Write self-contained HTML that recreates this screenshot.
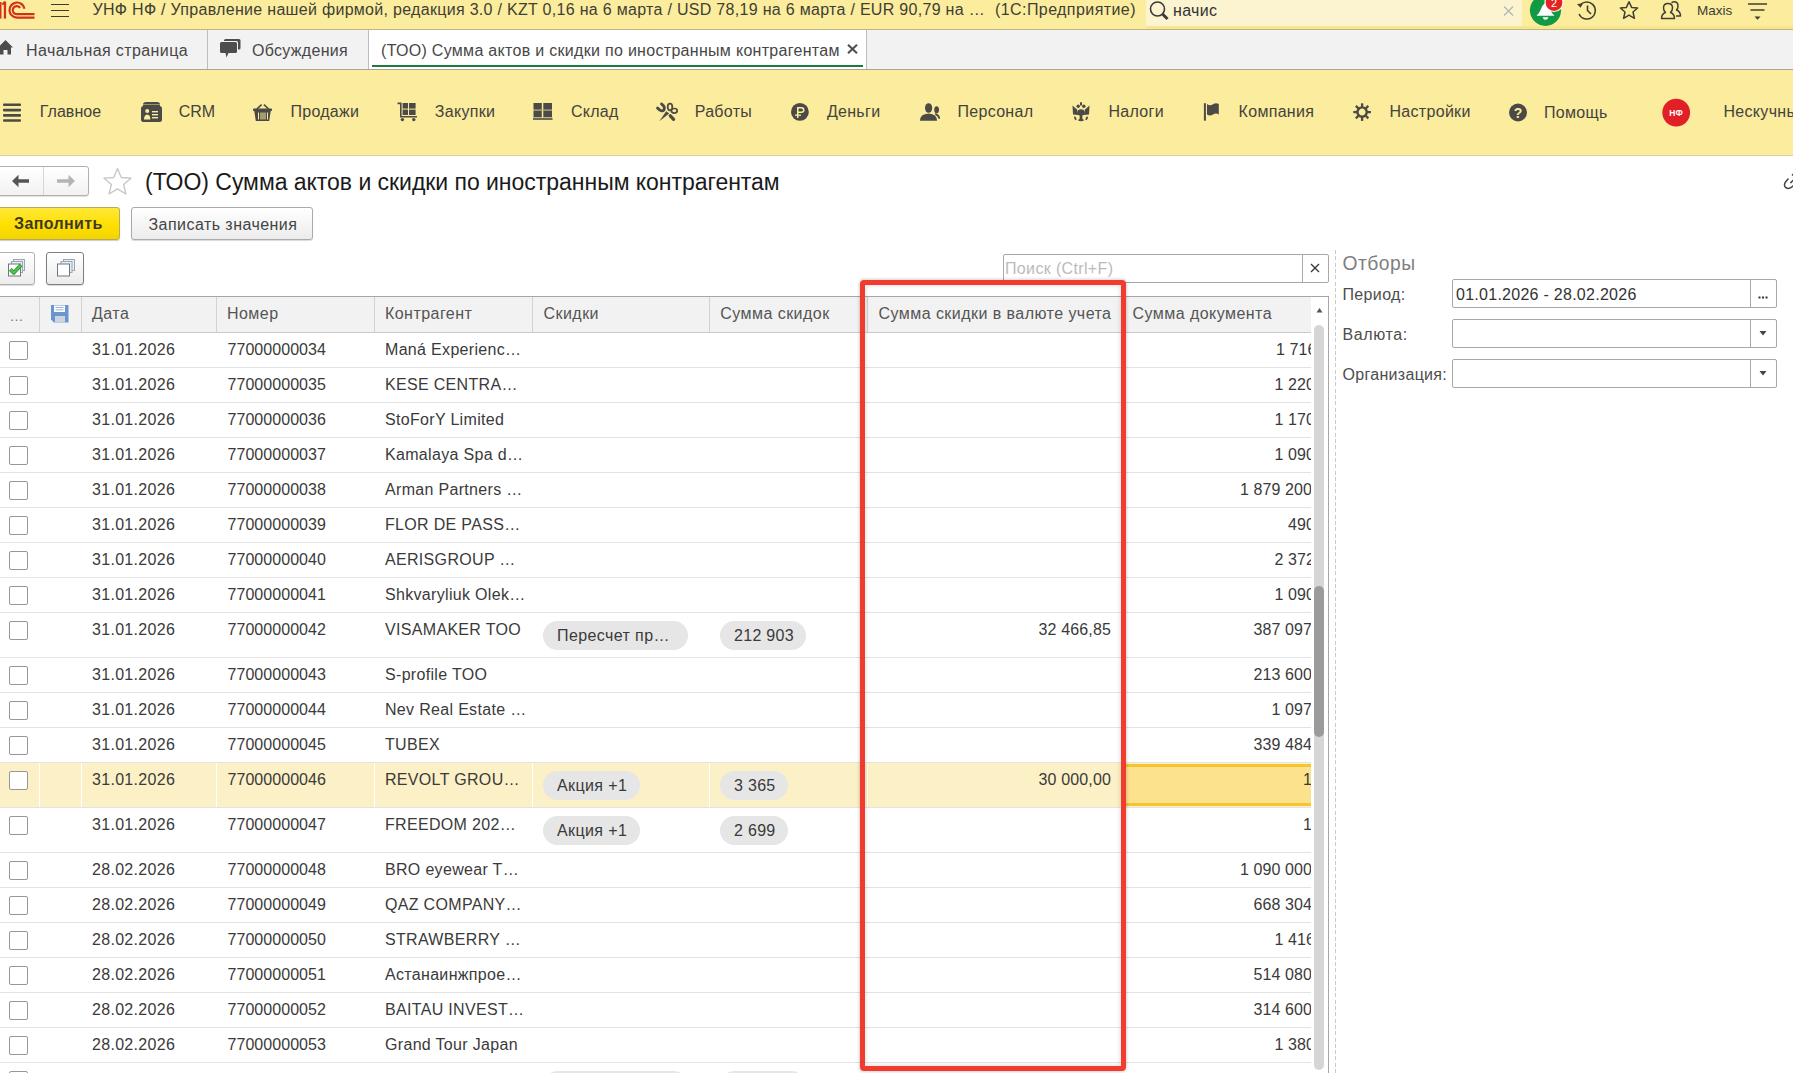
<!DOCTYPE html>
<html><head><meta charset="utf-8"><style>
html,body{margin:0;padding:0;width:1793px;height:1073px;overflow:hidden;background:#fff;position:relative}
.t{position:absolute;font-family:"Liberation Sans", sans-serif;white-space:nowrap}
.r{position:absolute}
</style></head><body>
<div class="r" style="left:0px;top:0px;width:1793px;height:29px;background:#FBEC9E"></div>
<div class="r" style="left:0px;top:29px;width:1793px;height:1px;background:#BDB383"></div>
<div class="r" style="left:1146px;top:0px;width:376px;height:26px;background:#FCF4D0"></div>
<div class="r" style="left:1146px;top:26px;width:647px;height:3px;background:#F8E68C"></div>
<svg class="r" style="left:0;top:0" width="40" height="24" viewBox="0 0 40 24">
<g fill="#D0331A"><rect x="0" y="2" width="1.5" height="16.6"/><rect x="3.8" y="1.5" width="2.3" height="17.1"/></g>
<g fill="none" stroke="#D0331A" stroke-width="2.2">
<path d="M2.2 4.5 L5 2"/>
<path d="M24.48 8.74 A7.55 7.55 0 1 0 17.05 17.6 H34.5"/>
<path d="M20.1 7.9 A4.05 4.05 0 1 0 16.95 14.2 H34.5"/>
</g></svg>
<div class="r" style="left:51px;top:3.6px;width:18px;height:1.6px;background:#3E3B28"></div>
<div class="r" style="left:51px;top:9.6px;width:18px;height:1.6px;background:#3E3B28"></div>
<div class="r" style="left:51px;top:15.8px;width:18px;height:1.6px;background:#3E3B28"></div>
<div class="t" style="left:92.5px;top:0.3px;font-size:16px;line-height:20px;color:#3F3F33;font-weight:normal;letter-spacing:0.3px">УНФ НФ / Управление нашей фирмой, редакция 3.0 / KZT 0,16 на 6 марта / USD 78,19 на 6 марта / EUR 90,79 на …</div>
<div class="t" style="left:995px;top:0.3px;font-size:16px;line-height:20px;color:#3F3F33;font-weight:normal;letter-spacing:0.42px">(1С:Предприятие)</div>
<svg class="r" style="left:1149px;top:0" width="22" height="22" viewBox="0 0 22 22">
<circle cx="8.5" cy="9" r="7" fill="none" stroke="#3A3A3A" stroke-width="1.6"/>
<path d="M13.5 14 L18.5 19" stroke="#3A3A3A" stroke-width="3" stroke-linecap="butt"/></svg>
<div class="t" style="left:1173px;top:0.5px;font-size:16px;line-height:20px;color:#333;font-weight:normal;letter-spacing:0.35px">начис</div>
<svg class="r" style="left:1503px;top:6px" width="11" height="10" viewBox="0 0 11 10">
<path d="M1 0.5 L10 9.5 M10 0.5 L1 9.5" stroke="#B5B5B5" stroke-width="1.3"/></svg>
<svg class="r" style="left:1528px;top:0" width="40" height="29" viewBox="0 0 40 29">
<circle cx="17.5" cy="10.3" r="15.6" fill="#119A43"/>
<path d="M8.5 15.8 Q11 14 13 9 Q15 3.5 17.5 3.5 Q20 3.5 22 9 Q24 14 26.5 15.8 Z" fill="#fff"/>
<path d="M14.5 17.3 H20.5 Q19.5 19.8 17.5 19.8 Q15.5 19.8 14.5 17.3Z" fill="#fff"/>
<circle cx="26" cy="2.5" r="9" fill="#E52421" stroke="#fff" stroke-width="1.2"/>
<text x="26" y="6.5" font-family="Liberation Sans" font-size="11" fill="#fff" text-anchor="middle">2</text>
</svg>
<svg class="r" style="left:1575px;top:0" width="24" height="22" viewBox="0 0 24 22">
<path d="M4.6 6 A8.5 8.5 0 1 1 4 14" fill="none" stroke="#3F3F33" stroke-width="1.5"/>
<path d="M2 4 L5.5 7.8 L8 3.5 Z" fill="#3F3F33"/>
<path d="M12.5 5.5 V10.5 L16 14" fill="none" stroke="#3F3F33" stroke-width="1.6"/>
</svg>
<svg class="r" style="left:1618px;top:0" width="22" height="21" viewBox="0 0 22 21">
<path d="M11 1.8 L13.6 7.4 L19.6 8 L15 12 L16.4 18.3 L11 15.1 L5.6 18.3 L7 12 L2.4 8 L8.4 7.4 Z" fill="none" stroke="#3F3F33" stroke-width="1.5" stroke-linejoin="round"/></svg>
<svg class="r" style="left:1659px;top:0" width="24" height="21" viewBox="0 0 24 21">
<g fill="none" stroke="#3F3F33" stroke-width="1.5" stroke-linejoin="round">
<path d="M2.5 18.5 Q2.5 14 6.5 12.5 Q4.5 10.5 4.5 8 Q4.5 3.5 9 3.5 Q13.5 3.5 13.5 8 Q13.5 10.5 11.5 12.5 Q15.5 14 15.5 18.5 Z"/>
<path d="M12.5 2.8 Q14 1.8 15 1.8 Q19 1.8 19 6 Q19 8.5 17.5 10 Q21.5 11.5 21.5 16 H17"/>
</g></svg>
<div class="t" style="left:1697px;top:1.5px;font-size:13.5px;line-height:18px;color:#3F3F33;font-weight:normal;">Maxis</div>
<svg class="r" style="left:1747px;top:0" width="21" height="22" viewBox="0 0 21 22">
<path d="M1 4 H20 M3.5 10 H17.5" stroke="#3F3F33" stroke-width="1.5"/>
<path d="M7.5 16.5 H13.5 L10.5 19.8 Z" fill="#3F3F33"/></svg>
<div class="r" style="left:0px;top:30px;width:1793px;height:39px;background:#F2F2F2"></div>
<div class="r" style="left:0px;top:69px;width:1793px;height:1px;background:#A9A596"></div>
<div class="r" style="left:207px;top:30px;width:1px;height:39px;background:#BDBDBD"></div>
<div class="r" style="left:368px;top:30px;width:498px;height:39px;background:#FFFFFF"></div>
<div class="r" style="left:368px;top:30px;width:1px;height:39px;background:#BDBDBD"></div>
<div class="r" style="left:866px;top:30px;width:1px;height:39px;background:#BDBDBD"></div>
<div class="r" style="left:372px;top:65px;width:491px;height:2px;background:#1E7A3C"></div>
<svg class="r" style="left:0;top:38px" width="14" height="18" viewBox="0 0 14 18">
<path d="M-2 9.5 L5.5 2 L13 9.5 H11 V16.5 H7.5 V12 H3.5 V16.5 H0 V9.5 Z" fill="#4D4D4D"/></svg>
<div class="t" style="left:26px;top:40.5px;font-size:16px;line-height:20px;color:#474747;font-weight:normal;letter-spacing:0.4px">Начальная страница</div>
<svg class="r" style="left:219px;top:38px" width="23" height="21" viewBox="0 0 23 21">
<path d="M5 2.5 Q5 1 6.5 1 H20 Q21.5 1 21.5 2.5 V10 Q21.5 11.5 20 11.5 H19 V4.5 Q19 3 17.5 3 H5 Z" fill="#4D4D4D"/>
<path d="M1 5.5 Q1 4 2.5 4 H16.5 Q18 4 18 5.5 V13.5 Q18 15 16.5 15 H9.5 L7.5 19.5 L6.5 15 H2.5 Q1 15 1 13.5 Z" fill="#4D4D4D"/></svg>
<div class="t" style="left:252px;top:40.5px;font-size:16px;line-height:20px;color:#474747;font-weight:normal;letter-spacing:0.3px">Обсуждения</div>
<div class="t" style="left:381px;top:40.5px;font-size:16px;line-height:20px;color:#474747;font-weight:normal;letter-spacing:0.3px">(ТОО) Сумма актов и скидки по иностранным контрагентам</div>
<svg class="r" style="left:847px;top:44px" width="11" height="10" viewBox="0 0 11 10">
<path d="M1 0.8 L10 9.2 M10 0.8 L1 9.2" stroke="#4D4D4D" stroke-width="2"/></svg>
<div class="r" style="left:0px;top:70px;width:1793px;height:85px;background:#FBEC9E"></div>
<div class="r" style="left:0px;top:155px;width:1793px;height:1px;background:#D9D0A0"></div>
<div class="t" style="left:39.7px;top:102px;font-size:16px;line-height:20px;color:#44433D;font-weight:normal;letter-spacing:0.05px">Главное</div>
<div class="t" style="left:178.7px;top:102px;font-size:16px;line-height:20px;color:#44433D;font-weight:normal;letter-spacing:0.0px">CRM</div>
<div class="t" style="left:290.4px;top:102px;font-size:16px;line-height:20px;color:#44433D;font-weight:normal;letter-spacing:0.3px">Продажи</div>
<div class="t" style="left:434.8px;top:102px;font-size:16px;line-height:20px;color:#44433D;font-weight:normal;letter-spacing:0.3px">Закупки</div>
<div class="t" style="left:570.9px;top:102px;font-size:16px;line-height:20px;color:#44433D;font-weight:normal;letter-spacing:0.3px">Склад</div>
<div class="t" style="left:694.7px;top:102px;font-size:16px;line-height:20px;color:#44433D;font-weight:normal;letter-spacing:0.3px">Работы</div>
<div class="t" style="left:826.9px;top:102px;font-size:16px;line-height:20px;color:#44433D;font-weight:normal;letter-spacing:0.3px">Деньги</div>
<div class="t" style="left:957.5px;top:102px;font-size:16px;line-height:20px;color:#44433D;font-weight:normal;letter-spacing:0.3px">Персонал</div>
<div class="t" style="left:1108.5px;top:102px;font-size:16px;line-height:20px;color:#44433D;font-weight:normal;letter-spacing:0.3px">Налоги</div>
<div class="t" style="left:1238.6px;top:102px;font-size:16px;line-height:20px;color:#44433D;font-weight:normal;letter-spacing:0.3px">Компания</div>
<div class="t" style="left:1389.5px;top:102px;font-size:16px;line-height:20px;color:#44433D;font-weight:normal;letter-spacing:0.3px">Настройки</div>
<div class="t" style="left:1544px;top:102.7px;font-size:16px;line-height:20px;color:#44433D;font-weight:normal;letter-spacing:0.3px">Помощь</div>
<div class="t" style="left:1723.5px;top:102px;font-size:16px;line-height:20px;color:#44433D;font-weight:normal;letter-spacing:0.3px">Нескучные</div>
<svg class="r" style="left:0;top:95px" width="1793" height="40" viewBox="0 95 1793 40">
<g fill="#4B4A46">
<rect x="3" y="103.5" width="18" height="2.6" rx="1"/><rect x="3" y="108.8" width="18" height="2.6" rx="1"/><rect x="3" y="114.1" width="18" height="2.6" rx="1"/><rect x="3" y="119.2" width="18" height="2.6" rx="1"/>
<path d="M143 106.5 V104.5 Q143 102 146 102 H157 Q160 102 160 104.5 V106.5 Z"/>
<rect x="141" y="106" width="21" height="16" rx="2.5"/>
<rect x="253" y="108.6" width="19" height="2.4" rx="0.8"/><path d="M254.2 110.5 H270.8 L269.2 121 H255.8 Z"/>
<path d="M256.8 109 L261.6 104.6 M263.9 104.6 L268.7 109" fill="none" stroke="#4B4A46" stroke-width="1.6"/>
<path d="M397.5 102.6 H401.6 V116 H417 V117.6 H400 V104.2 H397.5 Z"/><circle cx="402.4" cy="119.6" r="1.7"/><circle cx="413.8" cy="119.6" r="1.7"/>
<rect x="402.6" y="103" width="5.4" height="5.6"/><rect x="409" y="103" width="6.6" height="5.6"/><rect x="402.6" y="109.6" width="5.4" height="5.4"/><rect x="409" y="109.6" width="6.6" height="5.4"/>
<rect x="533.5" y="103" width="8.3" height="6.6"/><rect x="543.3" y="103" width="8.7" height="6.6"/><rect x="533.5" y="110.6" width="8.3" height="6.6"/><rect x="543.3" y="110.6" width="8.7" height="6.6"/><rect x="533" y="117.8" width="19.5" height="2.2" opacity="0.8"/>
<rect x="533.5" y="109.6" width="18.5" height="1" opacity="0.35"/>
<circle cx="799.9" cy="111.9" r="8.9"/>
<ellipse cx="928.6" cy="108" rx="3.6" ry="4.8"/>
<path d="M920 120.8 Q920 114.2 928.5 113.6 Q937 114.2 937 120.8 Z"/>
<ellipse cx="936.6" cy="109.8" rx="2.4" ry="3.5"/>
<path d="M935.2 113 Q939.6 114.2 940.2 118.6 L938.8 118.9 Q938 116 935.2 115 Z"/>
<rect x="1080" y="102.3" width="2" height="3.2"/>
<circle cx="1078.2" cy="106.2" r="1.7"/><circle cx="1083.8" cy="106.2" r="1.7"/>
<path d="M1072.5 105.5 L1077 109.5 L1078.3 115 L1073 114.5 Z"/>
<path d="M1089.5 105.5 L1085 109.5 L1083.7 115 L1089 114.5 Z"/>
<ellipse cx="1081" cy="112.5" rx="3.6" ry="3.2"/>
<path d="M1079.8 115 H1082.2 L1082.5 119 Q1084 119.5 1084 120.5 Q1081 122 1078 120.5 Q1078 119.5 1079.5 119 Z"/>
<ellipse cx="1075.3" cy="118.3" rx="1" ry="2" transform="rotate(-25 1075.3 118.3)"/>
<ellipse cx="1086.7" cy="118.3" rx="1" ry="2" transform="rotate(25 1086.7 118.3)"/>
<rect x="1203.9" y="103.2" width="2" height="17.5"/><path d="M1207 104 Q1210 106.3 1213 104.3 Q1216 102.3 1218.8 104 V114.5 Q1216 112.6 1213 114.5 Q1210 116.4 1207 114.6 Z"/>
<circle cx="1518" cy="112.5" r="9"/>
</g>
<circle cx="1676.2" cy="112.6" r="13.9" fill="#E21F26"/>
<text x="1676" y="116" font-family="Liberation Sans" font-weight="bold" font-size="8.5" fill="#fff" text-anchor="middle">НФ</text>
<g fill="#FBEC9E">
<rect x="143" y="104" width="17" height="1" opacity="0.45"/>
<circle cx="147.2" cy="111" r="2"/><path d="M144 119.5 Q144 115 147.2 114.5 Q150.4 115 150.4 119.5 Z"/>
<rect x="152" y="111" width="6" height="1.4"/><rect x="152" y="114" width="6" height="1.4"/><rect x="152" y="117" width="6" height="1.4"/>
<rect x="258" y="112.5" width="1" height="7"/><rect x="260.5" y="112.5" width="1" height="7"/><rect x="262.5" y="112.5" width="1" height="7"/><rect x="264.5" y="112.5" width="1" height="7"/><rect x="267" y="112.5" width="1" height="7"/>
<path d="M797 107 H801.5 Q804.5 107 804.5 110 Q804.5 113 801.5 113 H798.5 V118 H797 Z M798.5 108.4 V111.6 H801.3 Q803 111.6 803 110 Q803 108.4 801.3 108.4 Z"/><rect x="795" y="114.5" width="6" height="1.3"/>
</g>
<text x="1518" y="117.8" font-family="Liberation Sans" font-weight="bold" font-size="14" fill="#FBEC9E" text-anchor="middle">?</text>
<g transform="translate(650,98)">
<path d="M11.5 6 Q15.5 8.5 14 12 Q11.5 14.5 7.5 10" fill="none" stroke="#4B4A46" stroke-width="2.8" stroke-linecap="round"/>
<path d="M9.3 23.3 L16.2 13.3 L19.2 15.6 Z" fill="#4B4A46"/>
<ellipse cx="20" cy="9" rx="2.3" ry="3.3" fill="none" stroke="#4B4A46" stroke-width="1.7"/>
<ellipse cx="24.3" cy="12.8" rx="2.9" ry="2.3" fill="none" stroke="#4B4A46" stroke-width="1.7"/>
<path d="M20.3 17.8 L23.6 21.4" stroke="#4B4A46" stroke-width="3.2" stroke-linecap="round"/>
</g>
<g transform="translate(1362.1,112.1)" fill="#4B4A46">
<circle r="4.7" fill="none" stroke="#4B4A46" stroke-width="2.4"/><rect x="-1.15" y="-8.8" width="2.3" height="4.3" transform="rotate(0)"/><rect x="-1.15" y="-8.8" width="2.3" height="4.3" transform="rotate(45)"/><rect x="-1.15" y="-8.8" width="2.3" height="4.3" transform="rotate(90)"/><rect x="-1.15" y="-8.8" width="2.3" height="4.3" transform="rotate(135)"/><rect x="-1.15" y="-8.8" width="2.3" height="4.3" transform="rotate(180)"/><rect x="-1.15" y="-8.8" width="2.3" height="4.3" transform="rotate(225)"/><rect x="-1.15" y="-8.8" width="2.3" height="4.3" transform="rotate(270)"/><rect x="-1.15" y="-8.8" width="2.3" height="4.3" transform="rotate(315)"/>
</g>
</svg>
<div class="r" style="left:0px;top:156px;width:1793px;height:917px;background:#FFFFFF"></div>
<div class="r" style="left:-4px;top:166px;width:92.5px;height:30px;border:1px solid #B0B0B0;border-radius:3px;background:linear-gradient(#fff,#f1f1f1);box-sizing:border-box;box-shadow:0 1px 1px rgba(0,0,0,.12)"></div>
<div class="r" style="left:43px;top:167px;width:1px;height:28px;background:#D6D6D6"></div>
<svg class="r" style="left:10px;top:172px" width="70" height="18" viewBox="0 0 70 18">
<path d="M2 9 L8.5 2.8 V7.2 H19 V10.8 H8.5 V15.2 Z" fill="#555"/>
<path d="M65 9 L58.5 2.8 V7.2 H47 V10.8 H58.5 V15.2 Z" fill="#B4B4B4"/></svg>
<svg class="r" style="left:101px;top:166px" width="33" height="31" viewBox="0 0 33 31">
<path d="M16.5 2.5 L20.3 11.5 L30 12.2 L22.6 18.5 L24.9 28 L16.5 22.9 L8.1 28 L10.4 18.5 L3 12.2 L12.7 11.5 Z" fill="none" stroke="#C6C6C6" stroke-width="1.3" stroke-linejoin="round"/></svg>
<div class="t" style="left:145px;top:167px;font-size:23px;line-height:30px;color:#1A1A1A;font-weight:normal;letter-spacing:-0.03px">(ТОО) Сумма актов и скидки по иностранным контрагентам</div>
<div class="r" style="left:-4px;top:207px;width:124px;height:33px;border:1px solid #BBAA55;border-radius:3px;background:linear-gradient(#FFE83A,#FFDF00 55%,#F2D500);box-sizing:border-box;box-shadow:0 1px 1px rgba(0,0,0,.2)"></div>
<div class="t" style="left:14px;top:214px;font-size:16px;line-height:20px;color:#3D3A26;font-weight:bold;letter-spacing:0.38px">Заполнить</div>
<div class="r" style="left:131px;top:207px;width:182px;height:33px;border:1px solid #AAAAAA;border-radius:3px;background:linear-gradient(#fff,#ECECEC);box-sizing:border-box;box-shadow:0 1px 1px rgba(0,0,0,.15)"></div>
<div class="t" style="left:148.5px;top:214.5px;font-size:16px;line-height:20px;color:#444;font-weight:normal;letter-spacing:0.45px">Записать значения</div>
<div class="r" style="left:-4px;top:252px;width:39px;height:33px;border:1px solid #B0B0B0;border-radius:3px;background:linear-gradient(#fff,#ECECEC);box-sizing:border-box;box-shadow:0 1px 1px rgba(0,0,0,.15)"></div>
<div class="r" style="left:46px;top:252px;width:38px;height:33px;border:1px solid #7E7E7E;border-radius:3px;background:linear-gradient(#fff,#ECECEC);box-sizing:border-box;box-shadow:0 1px 1px rgba(0,0,0,.15)"></div>
<svg class="r" style="left:7px;top:258px" width="20" height="20" viewBox="0 0 20 20">
<rect x="6.5" y="1.5" width="11" height="11" fill="#E5EEF5" stroke="#9AA6B0"/>
<rect x="4.5" y="3.5" width="11" height="11" fill="#E5EEF5" stroke="#9AA6B0"/>
<rect x="1.5" y="6" width="12" height="12" fill="#fff" stroke="#6E7880"/>
<path d="M3.3 11.3 L6.8 14.8 L14 7" fill="none" stroke="#2E8B2E" stroke-width="3.8" stroke-linejoin="round"/><path d="M3.3 11.3 L6.8 14.8 L14 7" fill="none" stroke="#4CC44A" stroke-width="2.4" stroke-linejoin="round"/></svg>
<svg class="r" style="left:56px;top:258px" width="20" height="20" viewBox="0 0 20 20">
<rect x="7.5" y="1.5" width="11" height="11" fill="#E5EEF5" stroke="#9AA6B0"/>
<rect x="5" y="3.5" width="11" height="11" fill="#E5EEF5" stroke="#9AA6B0"/>
<rect x="1.5" y="6" width="12" height="12" fill="#fff" stroke="#6E7880"/></svg>
<div class="r" style="left:1003px;top:254px;width:326px;height:29px;border:1px solid #A8A8A8;border-radius:2px;box-sizing:border-box;background:#fff"></div>
<div class="r" style="left:1302px;top:255px;width:1px;height:27px;background:#A8A8A8"></div>
<div class="t" style="left:1005px;top:258.5px;font-size:16px;line-height:20px;color:#BBBBBB;font-weight:normal;letter-spacing:0.35px">Поиск (Ctrl+F)</div>
<svg class="r" style="left:1310px;top:263px" width="10" height="10" viewBox="0 0 10 10">
<path d="M1 1 L9 9 M9 1 L1 9" stroke="#333" stroke-width="1.25"/></svg>
<div class="r" style="left:0;top:296px;width:1329px;height:777px;overflow:hidden">
<div class="r" style="left:0;top:0;width:1328px;height:1px;background:#A6A6A6"></div>
<div class="r" style="left:1328px;top:0;width:1px;height:777px;background:#A6A6A6"></div>
<div class="r" style="left:0;top:1px;width:1311px;height:35px;background:#F2F2F2"></div>
<div class="r" style="left:0;top:36px;width:1311px;height:1px;background:#C9C9C9"></div>
<div class="r" style="left:39px;top:1px;width:1px;height:35px;background:#D2D2D2"></div>
<div class="r" style="left:81px;top:1px;width:1px;height:35px;background:#D2D2D2"></div>
<div class="r" style="left:216px;top:1px;width:1px;height:35px;background:#D2D2D2"></div>
<div class="r" style="left:374px;top:1px;width:1px;height:35px;background:#D2D2D2"></div>
<div class="r" style="left:532px;top:1px;width:1px;height:35px;background:#D2D2D2"></div>
<div class="r" style="left:709px;top:1px;width:1px;height:35px;background:#D2D2D2"></div>
<div class="r" style="left:867px;top:1px;width:1px;height:35px;background:#D2D2D2"></div>
<div class="r" style="left:1121px;top:1px;width:1px;height:35px;background:#D2D2D2"></div>
</div>
<div class="t" style="left:92px;top:304px;font-size:16px;line-height:20px;color:#555555;font-weight:normal;letter-spacing:0.45px">Дата</div>
<div class="t" style="left:227px;top:304px;font-size:16px;line-height:20px;color:#555555;font-weight:normal;letter-spacing:0.45px">Номер</div>
<div class="t" style="left:385px;top:304px;font-size:16px;line-height:20px;color:#555555;font-weight:normal;letter-spacing:0.45px">Контрагент</div>
<div class="t" style="left:543.5px;top:304px;font-size:16px;line-height:20px;color:#555555;font-weight:normal;letter-spacing:0.45px">Скидки</div>
<div class="t" style="left:720.3px;top:304px;font-size:16px;line-height:20px;color:#555555;font-weight:normal;letter-spacing:0.45px">Сумма скидок</div>
<div class="t" style="left:878.5px;top:304px;font-size:16px;line-height:20px;color:#555555;font-weight:normal;letter-spacing:0.45px">Сумма скидки в валюте учета</div>
<div class="t" style="left:1132.5px;top:304px;font-size:16px;line-height:20px;color:#555555;font-weight:normal;letter-spacing:0.45px">Сумма документа</div>
<div class="t" style="left:9.5px;top:306px;font-size:14px;line-height:20px;color:#777;font-weight:normal;">…</div>
<svg class="r" style="left:50px;top:304px" width="20" height="20" viewBox="0 0 20 20">
<path d="M1 1 H18.5 V18.5 H4 L1 15.5 Z" fill="#6C95CF"/>
<rect x="4" y="1.5" width="11" height="6.5" fill="#fff"/>
<rect x="5.5" y="3" width="8" height="1" fill="#8FB0DC"/><rect x="5.5" y="5.3" width="8" height="1" fill="#8FB0DC"/>
<rect x="5" y="12" width="10" height="6.5" fill="#C9D4E0"/>
</svg>
<svg class="r" style="left:1315px;top:306px" width="9" height="8" viewBox="0 0 9 8"><path d="M1.5 6.5 H7.5 L4.5 2 Z" fill="#555"/></svg>
<div class="r" style="left:1314px;top:325px;width:10px;height:745px;background:#D6D6D6;border-radius:5px"></div>
<div class="r" style="left:1314px;top:586px;width:10px;height:151px;background:#9B9B9B;border-radius:5px"></div>
<div class="r" style="left:9px;top:340.5px;width:19px;height:19px;border:1px solid #979797;border-radius:2px;background:#fff;box-sizing:border-box"></div>
<div class="t" style="left:92px;top:340px;font-size:16px;line-height:20px;color:#3A3A3A;font-weight:normal;letter-spacing:0.3px">31.01.2026</div>
<div class="t" style="left:227.5px;top:340px;font-size:16px;line-height:20px;color:#3A3A3A;font-weight:normal;letter-spacing:0.05px">77000000034</div>
<div class="t" style="left:385px;top:340px;font-size:16px;line-height:20px;color:#3A3A3A;font-weight:normal;letter-spacing:0.32px;white-space:nowrap">Maná Experienc…</div>
<div class="r" style="left:1121px;top:333px;width:190px;height:30px;overflow:hidden"><div class="t" style="right:-5.5px;top:7px;font-size:16px;line-height:20px;color:#3A3A3A;letter-spacing:0.1px">1 716</div></div>
<div class="r" style="left:0px;top:367px;width:1311px;height:1px;background:#E3E3E3"></div>
<div class="r" style="left:9px;top:375.5px;width:19px;height:19px;border:1px solid #979797;border-radius:2px;background:#fff;box-sizing:border-box"></div>
<div class="t" style="left:92px;top:375px;font-size:16px;line-height:20px;color:#3A3A3A;font-weight:normal;letter-spacing:0.3px">31.01.2026</div>
<div class="t" style="left:227.5px;top:375px;font-size:16px;line-height:20px;color:#3A3A3A;font-weight:normal;letter-spacing:0.05px">77000000035</div>
<div class="t" style="left:385px;top:375px;font-size:16px;line-height:20px;color:#3A3A3A;font-weight:normal;letter-spacing:0.32px;white-space:nowrap">KESE CENTRA…</div>
<div class="r" style="left:1121px;top:368px;width:190px;height:30px;overflow:hidden"><div class="t" style="right:-4px;top:7px;font-size:16px;line-height:20px;color:#3A3A3A;letter-spacing:0.1px">1 220</div></div>
<div class="r" style="left:0px;top:402px;width:1311px;height:1px;background:#E3E3E3"></div>
<div class="r" style="left:9px;top:410.5px;width:19px;height:19px;border:1px solid #979797;border-radius:2px;background:#fff;box-sizing:border-box"></div>
<div class="t" style="left:92px;top:410px;font-size:16px;line-height:20px;color:#3A3A3A;font-weight:normal;letter-spacing:0.3px">31.01.2026</div>
<div class="t" style="left:227.5px;top:410px;font-size:16px;line-height:20px;color:#3A3A3A;font-weight:normal;letter-spacing:0.05px">77000000036</div>
<div class="t" style="left:385px;top:410px;font-size:16px;line-height:20px;color:#3A3A3A;font-weight:normal;letter-spacing:0.32px;white-space:nowrap">StoForY Limited</div>
<div class="r" style="left:1121px;top:403px;width:190px;height:30px;overflow:hidden"><div class="t" style="right:-4px;top:7px;font-size:16px;line-height:20px;color:#3A3A3A;letter-spacing:0.1px">1 170</div></div>
<div class="r" style="left:0px;top:437px;width:1311px;height:1px;background:#E3E3E3"></div>
<div class="r" style="left:9px;top:445.5px;width:19px;height:19px;border:1px solid #979797;border-radius:2px;background:#fff;box-sizing:border-box"></div>
<div class="t" style="left:92px;top:445px;font-size:16px;line-height:20px;color:#3A3A3A;font-weight:normal;letter-spacing:0.3px">31.01.2026</div>
<div class="t" style="left:227.5px;top:445px;font-size:16px;line-height:20px;color:#3A3A3A;font-weight:normal;letter-spacing:0.05px">77000000037</div>
<div class="t" style="left:385px;top:445px;font-size:16px;line-height:20px;color:#3A3A3A;font-weight:normal;letter-spacing:0.32px;white-space:nowrap">Kamalaya Spa d…</div>
<div class="r" style="left:1121px;top:438px;width:190px;height:30px;overflow:hidden"><div class="t" style="right:-4px;top:7px;font-size:16px;line-height:20px;color:#3A3A3A;letter-spacing:0.1px">1 090</div></div>
<div class="r" style="left:0px;top:472px;width:1311px;height:1px;background:#E3E3E3"></div>
<div class="r" style="left:9px;top:480.5px;width:19px;height:19px;border:1px solid #979797;border-radius:2px;background:#fff;box-sizing:border-box"></div>
<div class="t" style="left:92px;top:480px;font-size:16px;line-height:20px;color:#3A3A3A;font-weight:normal;letter-spacing:0.3px">31.01.2026</div>
<div class="t" style="left:227.5px;top:480px;font-size:16px;line-height:20px;color:#3A3A3A;font-weight:normal;letter-spacing:0.05px">77000000038</div>
<div class="t" style="left:385px;top:480px;font-size:16px;line-height:20px;color:#3A3A3A;font-weight:normal;letter-spacing:0.32px;white-space:nowrap">Arman Partners …</div>
<div class="r" style="left:1121px;top:473px;width:190px;height:30px;overflow:hidden"><div class="t" style="right:-1px;top:7px;font-size:16px;line-height:20px;color:#3A3A3A;letter-spacing:0.1px">1 879 200</div></div>
<div class="r" style="left:0px;top:507px;width:1311px;height:1px;background:#E3E3E3"></div>
<div class="r" style="left:9px;top:515.5px;width:19px;height:19px;border:1px solid #979797;border-radius:2px;background:#fff;box-sizing:border-box"></div>
<div class="t" style="left:92px;top:515px;font-size:16px;line-height:20px;color:#3A3A3A;font-weight:normal;letter-spacing:0.3px">31.01.2026</div>
<div class="t" style="left:227.5px;top:515px;font-size:16px;line-height:20px;color:#3A3A3A;font-weight:normal;letter-spacing:0.05px">77000000039</div>
<div class="t" style="left:385px;top:515px;font-size:16px;line-height:20px;color:#3A3A3A;font-weight:normal;letter-spacing:0.32px;white-space:nowrap">FLOR DE PASS…</div>
<div class="r" style="left:1121px;top:508px;width:190px;height:30px;overflow:hidden"><div class="t" style="right:-4px;top:7px;font-size:16px;line-height:20px;color:#3A3A3A;letter-spacing:0.1px">490</div></div>
<div class="r" style="left:0px;top:542px;width:1311px;height:1px;background:#E3E3E3"></div>
<div class="r" style="left:9px;top:550.5px;width:19px;height:19px;border:1px solid #979797;border-radius:2px;background:#fff;box-sizing:border-box"></div>
<div class="t" style="left:92px;top:550px;font-size:16px;line-height:20px;color:#3A3A3A;font-weight:normal;letter-spacing:0.3px">31.01.2026</div>
<div class="t" style="left:227.5px;top:550px;font-size:16px;line-height:20px;color:#3A3A3A;font-weight:normal;letter-spacing:0.05px">77000000040</div>
<div class="t" style="left:385px;top:550px;font-size:16px;line-height:20px;color:#3A3A3A;font-weight:normal;letter-spacing:0.32px;white-space:nowrap">AERISGROUP …</div>
<div class="r" style="left:1121px;top:543px;width:190px;height:30px;overflow:hidden"><div class="t" style="right:-4px;top:7px;font-size:16px;line-height:20px;color:#3A3A3A;letter-spacing:0.1px">2 372</div></div>
<div class="r" style="left:0px;top:577px;width:1311px;height:1px;background:#E3E3E3"></div>
<div class="r" style="left:9px;top:585.5px;width:19px;height:19px;border:1px solid #979797;border-radius:2px;background:#fff;box-sizing:border-box"></div>
<div class="t" style="left:92px;top:585px;font-size:16px;line-height:20px;color:#3A3A3A;font-weight:normal;letter-spacing:0.3px">31.01.2026</div>
<div class="t" style="left:227.5px;top:585px;font-size:16px;line-height:20px;color:#3A3A3A;font-weight:normal;letter-spacing:0.05px">77000000041</div>
<div class="t" style="left:385px;top:585px;font-size:16px;line-height:20px;color:#3A3A3A;font-weight:normal;letter-spacing:0.32px;white-space:nowrap">Shkvaryliuk Olek…</div>
<div class="r" style="left:1121px;top:578px;width:190px;height:30px;overflow:hidden"><div class="t" style="right:-4px;top:7px;font-size:16px;line-height:20px;color:#3A3A3A;letter-spacing:0.1px">1 090</div></div>
<div class="r" style="left:0px;top:612px;width:1311px;height:1px;background:#E3E3E3"></div>
<div class="r" style="left:9px;top:620.5px;width:19px;height:19px;border:1px solid #979797;border-radius:2px;background:#fff;box-sizing:border-box"></div>
<div class="t" style="left:92px;top:620px;font-size:16px;line-height:20px;color:#3A3A3A;font-weight:normal;letter-spacing:0.3px">31.01.2026</div>
<div class="t" style="left:227.5px;top:620px;font-size:16px;line-height:20px;color:#3A3A3A;font-weight:normal;letter-spacing:0.05px">77000000042</div>
<div class="t" style="left:385px;top:620px;font-size:16px;line-height:20px;color:#3A3A3A;font-weight:normal;letter-spacing:0.32px;white-space:nowrap">VISAMAKER TOO</div>
<div class="r" style="left:543px;top:620.5px;width:145px;height:29px;background:#E6E6E6;border-radius:15px"></div>
<div class="t" style="left:557px;top:625.5px;font-size:16px;line-height:20px;color:#3A3A3A;font-weight:normal;letter-spacing:0.4px">Пересчет пр…</div>
<div class="r" style="left:720px;top:620.5px;width:86px;height:29px;background:#E6E6E6;border-radius:15px"></div>
<div class="t" style="left:734px;top:625.5px;font-size:16px;line-height:20px;color:#3A3A3A;font-weight:normal;letter-spacing:0.3px">212 903</div>
<div class="t" style="right:682px;top:620px;font-size:16px;line-height:20px;color:#3A3A3A;letter-spacing:0.15px">32 466,85</div>
<div class="r" style="left:1121px;top:613px;width:190px;height:30px;overflow:hidden"><div class="t" style="right:-1px;top:7px;font-size:16px;line-height:20px;color:#3A3A3A;letter-spacing:0.1px">387 097</div></div>
<div class="r" style="left:0px;top:657px;width:1311px;height:1px;background:#E3E3E3"></div>
<div class="r" style="left:9px;top:665.5px;width:19px;height:19px;border:1px solid #979797;border-radius:2px;background:#fff;box-sizing:border-box"></div>
<div class="t" style="left:92px;top:665px;font-size:16px;line-height:20px;color:#3A3A3A;font-weight:normal;letter-spacing:0.3px">31.01.2026</div>
<div class="t" style="left:227.5px;top:665px;font-size:16px;line-height:20px;color:#3A3A3A;font-weight:normal;letter-spacing:0.05px">77000000043</div>
<div class="t" style="left:385px;top:665px;font-size:16px;line-height:20px;color:#3A3A3A;font-weight:normal;letter-spacing:0.32px;white-space:nowrap">S-profile TOO</div>
<div class="r" style="left:1121px;top:658px;width:190px;height:30px;overflow:hidden"><div class="t" style="right:-1px;top:7px;font-size:16px;line-height:20px;color:#3A3A3A;letter-spacing:0.1px">213 600</div></div>
<div class="r" style="left:0px;top:692px;width:1311px;height:1px;background:#E3E3E3"></div>
<div class="r" style="left:9px;top:700.5px;width:19px;height:19px;border:1px solid #979797;border-radius:2px;background:#fff;box-sizing:border-box"></div>
<div class="t" style="left:92px;top:700px;font-size:16px;line-height:20px;color:#3A3A3A;font-weight:normal;letter-spacing:0.3px">31.01.2026</div>
<div class="t" style="left:227.5px;top:700px;font-size:16px;line-height:20px;color:#3A3A3A;font-weight:normal;letter-spacing:0.05px">77000000044</div>
<div class="t" style="left:385px;top:700px;font-size:16px;line-height:20px;color:#3A3A3A;font-weight:normal;letter-spacing:0.32px;white-space:nowrap">Nev Real Estate …</div>
<div class="r" style="left:1121px;top:693px;width:190px;height:30px;overflow:hidden"><div class="t" style="right:-1px;top:7px;font-size:16px;line-height:20px;color:#3A3A3A;letter-spacing:0.1px">1 097</div></div>
<div class="r" style="left:0px;top:727px;width:1311px;height:1px;background:#E3E3E3"></div>
<div class="r" style="left:9px;top:735.5px;width:19px;height:19px;border:1px solid #979797;border-radius:2px;background:#fff;box-sizing:border-box"></div>
<div class="t" style="left:92px;top:735px;font-size:16px;line-height:20px;color:#3A3A3A;font-weight:normal;letter-spacing:0.3px">31.01.2026</div>
<div class="t" style="left:227.5px;top:735px;font-size:16px;line-height:20px;color:#3A3A3A;font-weight:normal;letter-spacing:0.05px">77000000045</div>
<div class="t" style="left:385px;top:735px;font-size:16px;line-height:20px;color:#3A3A3A;font-weight:normal;letter-spacing:0.32px;white-space:nowrap">TUBEX</div>
<div class="r" style="left:1121px;top:728px;width:190px;height:30px;overflow:hidden"><div class="t" style="right:-1px;top:7px;font-size:16px;line-height:20px;color:#3A3A3A;letter-spacing:0.1px">339 484</div></div>
<div class="r" style="left:0px;top:762px;width:1311px;height:1px;background:#E3E3E3"></div>
<div class="r" style="left:0px;top:763px;width:1311px;height:44px;background:#FCF0C6"></div>
<div class="r" style="left:39px;top:763px;width:1px;height:44px;background:#FFFFFF"></div>
<div class="r" style="left:81px;top:763px;width:1px;height:44px;background:#FFFFFF"></div>
<div class="r" style="left:216px;top:763px;width:1px;height:44px;background:#FFFFFF"></div>
<div class="r" style="left:374px;top:763px;width:1px;height:44px;background:#FFFFFF"></div>
<div class="r" style="left:532px;top:763px;width:1px;height:44px;background:#FFFFFF"></div>
<div class="r" style="left:709px;top:763px;width:1px;height:44px;background:#FFFFFF"></div>
<div class="r" style="left:867px;top:763px;width:1px;height:44px;background:#FFFFFF"></div>
<div class="r" style="left:1121px;top:764px;width:190px;height:42px;background:#FCE28C;border-top:3px solid #F5C42F;border-bottom:3px solid #F5C42F;box-sizing:border-box"></div>
<div class="r" style="left:9px;top:770.5px;width:19px;height:19px;border:1px solid #979797;border-radius:2px;background:#fff;box-sizing:border-box"></div>
<div class="t" style="left:92px;top:770px;font-size:16px;line-height:20px;color:#3A3A3A;font-weight:normal;letter-spacing:0.3px">31.01.2026</div>
<div class="t" style="left:227.5px;top:770px;font-size:16px;line-height:20px;color:#3A3A3A;font-weight:normal;letter-spacing:0.05px">77000000046</div>
<div class="t" style="left:385px;top:770px;font-size:16px;line-height:20px;color:#3A3A3A;font-weight:normal;letter-spacing:0.32px;white-space:nowrap">REVOLT GROU…</div>
<div class="r" style="left:543px;top:770.5px;width:97px;height:29px;background:#E6E6E6;border-radius:15px"></div>
<div class="t" style="left:557px;top:775.5px;font-size:16px;line-height:20px;color:#3A3A3A;font-weight:normal;letter-spacing:0.4px">Акция +1</div>
<div class="r" style="left:720px;top:770.5px;width:68px;height:29px;background:#E6E6E6;border-radius:15px"></div>
<div class="t" style="left:734px;top:775.5px;font-size:16px;line-height:20px;color:#3A3A3A;font-weight:normal;letter-spacing:0.3px">3 365</div>
<div class="t" style="right:682px;top:770px;font-size:16px;line-height:20px;color:#3A3A3A;letter-spacing:0.15px">30 000,00</div>
<div class="r" style="left:1121px;top:763px;width:190px;height:30px;overflow:hidden"><div class="t" style="right:-1px;top:7px;font-size:16px;line-height:20px;color:#3A3A3A;letter-spacing:0.1px">1</div></div>
<div class="r" style="left:0px;top:807px;width:1311px;height:1px;background:#E3E3E3"></div>
<div class="r" style="left:9px;top:815.5px;width:19px;height:19px;border:1px solid #979797;border-radius:2px;background:#fff;box-sizing:border-box"></div>
<div class="t" style="left:92px;top:815px;font-size:16px;line-height:20px;color:#3A3A3A;font-weight:normal;letter-spacing:0.3px">31.01.2026</div>
<div class="t" style="left:227.5px;top:815px;font-size:16px;line-height:20px;color:#3A3A3A;font-weight:normal;letter-spacing:0.05px">77000000047</div>
<div class="t" style="left:385px;top:815px;font-size:16px;line-height:20px;color:#3A3A3A;font-weight:normal;letter-spacing:0.32px;white-space:nowrap">FREEDOM 202…</div>
<div class="r" style="left:543px;top:815.5px;width:97px;height:29px;background:#E6E6E6;border-radius:15px"></div>
<div class="t" style="left:557px;top:820.5px;font-size:16px;line-height:20px;color:#3A3A3A;font-weight:normal;letter-spacing:0.4px">Акция +1</div>
<div class="r" style="left:720px;top:815.5px;width:68px;height:29px;background:#E6E6E6;border-radius:15px"></div>
<div class="t" style="left:734px;top:820.5px;font-size:16px;line-height:20px;color:#3A3A3A;font-weight:normal;letter-spacing:0.3px">2 699</div>
<div class="r" style="left:1121px;top:808px;width:190px;height:30px;overflow:hidden"><div class="t" style="right:-1px;top:7px;font-size:16px;line-height:20px;color:#3A3A3A;letter-spacing:0.1px">1</div></div>
<div class="r" style="left:0px;top:852px;width:1311px;height:1px;background:#E3E3E3"></div>
<div class="r" style="left:9px;top:860.5px;width:19px;height:19px;border:1px solid #979797;border-radius:2px;background:#fff;box-sizing:border-box"></div>
<div class="t" style="left:92px;top:860px;font-size:16px;line-height:20px;color:#3A3A3A;font-weight:normal;letter-spacing:0.3px">28.02.2026</div>
<div class="t" style="left:227.5px;top:860px;font-size:16px;line-height:20px;color:#3A3A3A;font-weight:normal;letter-spacing:0.05px">77000000048</div>
<div class="t" style="left:385px;top:860px;font-size:16px;line-height:20px;color:#3A3A3A;font-weight:normal;letter-spacing:0.32px;white-space:nowrap">BRO eyewear T…</div>
<div class="r" style="left:1121px;top:853px;width:190px;height:30px;overflow:hidden"><div class="t" style="right:-1px;top:7px;font-size:16px;line-height:20px;color:#3A3A3A;letter-spacing:0.1px">1 090 000</div></div>
<div class="r" style="left:0px;top:887px;width:1311px;height:1px;background:#E3E3E3"></div>
<div class="r" style="left:9px;top:895.5px;width:19px;height:19px;border:1px solid #979797;border-radius:2px;background:#fff;box-sizing:border-box"></div>
<div class="t" style="left:92px;top:895px;font-size:16px;line-height:20px;color:#3A3A3A;font-weight:normal;letter-spacing:0.3px">28.02.2026</div>
<div class="t" style="left:227.5px;top:895px;font-size:16px;line-height:20px;color:#3A3A3A;font-weight:normal;letter-spacing:0.05px">77000000049</div>
<div class="t" style="left:385px;top:895px;font-size:16px;line-height:20px;color:#3A3A3A;font-weight:normal;letter-spacing:0.32px;white-space:nowrap">QAZ COMPANY…</div>
<div class="r" style="left:1121px;top:888px;width:190px;height:30px;overflow:hidden"><div class="t" style="right:-1px;top:7px;font-size:16px;line-height:20px;color:#3A3A3A;letter-spacing:0.1px">668 304</div></div>
<div class="r" style="left:0px;top:922px;width:1311px;height:1px;background:#E3E3E3"></div>
<div class="r" style="left:9px;top:930.5px;width:19px;height:19px;border:1px solid #979797;border-radius:2px;background:#fff;box-sizing:border-box"></div>
<div class="t" style="left:92px;top:930px;font-size:16px;line-height:20px;color:#3A3A3A;font-weight:normal;letter-spacing:0.3px">28.02.2026</div>
<div class="t" style="left:227.5px;top:930px;font-size:16px;line-height:20px;color:#3A3A3A;font-weight:normal;letter-spacing:0.05px">77000000050</div>
<div class="t" style="left:385px;top:930px;font-size:16px;line-height:20px;color:#3A3A3A;font-weight:normal;letter-spacing:0.32px;white-space:nowrap">STRAWBERRY …</div>
<div class="r" style="left:1121px;top:923px;width:190px;height:30px;overflow:hidden"><div class="t" style="right:-4px;top:7px;font-size:16px;line-height:20px;color:#3A3A3A;letter-spacing:0.1px">1 416</div></div>
<div class="r" style="left:0px;top:957px;width:1311px;height:1px;background:#E3E3E3"></div>
<div class="r" style="left:9px;top:965.5px;width:19px;height:19px;border:1px solid #979797;border-radius:2px;background:#fff;box-sizing:border-box"></div>
<div class="t" style="left:92px;top:965px;font-size:16px;line-height:20px;color:#3A3A3A;font-weight:normal;letter-spacing:0.3px">28.02.2026</div>
<div class="t" style="left:227.5px;top:965px;font-size:16px;line-height:20px;color:#3A3A3A;font-weight:normal;letter-spacing:0.05px">77000000051</div>
<div class="t" style="left:385px;top:965px;font-size:16px;line-height:20px;color:#3A3A3A;font-weight:normal;letter-spacing:0.32px;white-space:nowrap">Астанаинжпрое…</div>
<div class="r" style="left:1121px;top:958px;width:190px;height:30px;overflow:hidden"><div class="t" style="right:-1px;top:7px;font-size:16px;line-height:20px;color:#3A3A3A;letter-spacing:0.1px">514 080</div></div>
<div class="r" style="left:0px;top:992px;width:1311px;height:1px;background:#E3E3E3"></div>
<div class="r" style="left:9px;top:1000.5px;width:19px;height:19px;border:1px solid #979797;border-radius:2px;background:#fff;box-sizing:border-box"></div>
<div class="t" style="left:92px;top:1000px;font-size:16px;line-height:20px;color:#3A3A3A;font-weight:normal;letter-spacing:0.3px">28.02.2026</div>
<div class="t" style="left:227.5px;top:1000px;font-size:16px;line-height:20px;color:#3A3A3A;font-weight:normal;letter-spacing:0.05px">77000000052</div>
<div class="t" style="left:385px;top:1000px;font-size:16px;line-height:20px;color:#3A3A3A;font-weight:normal;letter-spacing:0.32px;white-space:nowrap">BAITAU INVEST…</div>
<div class="r" style="left:1121px;top:993px;width:190px;height:30px;overflow:hidden"><div class="t" style="right:-1px;top:7px;font-size:16px;line-height:20px;color:#3A3A3A;letter-spacing:0.1px">314 600</div></div>
<div class="r" style="left:0px;top:1027px;width:1311px;height:1px;background:#E3E3E3"></div>
<div class="r" style="left:9px;top:1035.5px;width:19px;height:19px;border:1px solid #979797;border-radius:2px;background:#fff;box-sizing:border-box"></div>
<div class="t" style="left:92px;top:1035px;font-size:16px;line-height:20px;color:#3A3A3A;font-weight:normal;letter-spacing:0.3px">28.02.2026</div>
<div class="t" style="left:227.5px;top:1035px;font-size:16px;line-height:20px;color:#3A3A3A;font-weight:normal;letter-spacing:0.05px">77000000053</div>
<div class="t" style="left:385px;top:1035px;font-size:16px;line-height:20px;color:#3A3A3A;font-weight:normal;letter-spacing:0.32px;white-space:nowrap">Grand Tour Japan</div>
<div class="r" style="left:1121px;top:1028px;width:190px;height:30px;overflow:hidden"><div class="t" style="right:-4px;top:7px;font-size:16px;line-height:20px;color:#3A3A3A;letter-spacing:0.1px">1 380</div></div>
<div class="r" style="left:0px;top:1062px;width:1311px;height:1px;background:#E3E3E3"></div>
<div class="r" style="left:9px;top:1070.5px;width:19px;height:19px;border:1px solid #979797;border-radius:2px;background:#fff;box-sizing:border-box"></div>
<div class="t" style="left:92px;top:1070px;font-size:16px;line-height:20px;color:#3A3A3A;font-weight:normal;letter-spacing:0.3px">28.02.2026</div>
<div class="t" style="left:227.5px;top:1070px;font-size:16px;line-height:20px;color:#3A3A3A;font-weight:normal;letter-spacing:0.05px">77000000054</div>
<div class="t" style="left:385px;top:1070px;font-size:16px;line-height:20px;color:#3A3A3A;font-weight:normal;letter-spacing:0.32px;white-space:nowrap">…</div>
<div class="r" style="left:543px;top:1070.5px;width:145px;height:29px;background:#E6E6E6;border-radius:15px"></div>
<div class="t" style="left:557px;top:1075.5px;font-size:16px;line-height:20px;color:#3A3A3A;font-weight:normal;letter-spacing:0.4px">Пересчет пр…</div>
<div class="r" style="left:720px;top:1070.5px;width:86px;height:29px;background:#E6E6E6;border-radius:15px"></div>
<div class="t" style="left:734px;top:1075.5px;font-size:16px;line-height:20px;color:#3A3A3A;font-weight:normal;letter-spacing:0.3px">212 903</div>
<div class="r" style="left:0px;top:1107px;width:1311px;height:1px;background:#E3E3E3"></div>
<div class="r" style="left:860px;top:280px;width:266px;height:791px;border:5px solid #F03B2E;border-radius:4px;box-sizing:border-box;box-shadow:0 0 3px 1px rgba(0,0,0,.18), inset 0 0 4px 1px rgba(0,0,0,.12)"></div>
<div class="r" style="left:1335px;top:250px;width:1px;height:823px;background:repeating-linear-gradient(to bottom,#CACACA 0 4px,transparent 4px 6.3px)"></div>
<div class="t" style="left:1342.5px;top:251.7px;font-size:19.3px;line-height:24px;color:#7F7F7F;font-weight:normal;letter-spacing:0.5px">Отборы</div>
<div class="t" style="left:1342.5px;top:284.5px;font-size:16px;line-height:20px;color:#4D4D4D;font-weight:normal;letter-spacing:0.35px">Период:</div>
<div class="t" style="left:1342.5px;top:324.5px;font-size:16px;line-height:20px;color:#4D4D4D;font-weight:normal;letter-spacing:0.6px">Валюта:</div>
<div class="t" style="left:1342.5px;top:364.5px;font-size:16px;line-height:20px;color:#4D4D4D;font-weight:normal;letter-spacing:0.3px">Организация:</div>
<div class="r" style="left:1452px;top:279px;width:325px;height:29px;border:1px solid #A8A8A8;border-radius:2px;box-sizing:border-box;background:#fff"></div>
<div class="r" style="left:1750px;top:280px;width:1px;height:27px;background:#A8A8A8"></div>
<div class="r" style="left:1452px;top:319px;width:325px;height:29px;border:1px solid #A8A8A8;border-radius:2px;box-sizing:border-box;background:#fff"></div>
<div class="r" style="left:1750px;top:320px;width:1px;height:27px;background:#A8A8A8"></div>
<div class="r" style="left:1452px;top:359px;width:325px;height:29px;border:1px solid #A8A8A8;border-radius:2px;box-sizing:border-box;background:#fff"></div>
<div class="r" style="left:1750px;top:360px;width:1px;height:27px;background:#A8A8A8"></div>
<div class="t" style="left:1456px;top:284.5px;font-size:16px;line-height:20px;color:#333;font-weight:normal;letter-spacing:0.27px">01.01.2026 - 28.02.2026</div>
<svg class="r" style="left:1752px;top:290px" width="22" height="40" viewBox="0 0 22 40">
<rect x="6.5" y="6.5" width="2" height="2" fill="#333"/><rect x="10" y="6.5" width="2" height="2" fill="#333"/><rect x="13.5" y="6.5" width="2" height="2" fill="#333"/>
</svg>
<svg class="r" style="left:1759px;top:330.5px" width="8" height="5" viewBox="0 0 8 5"><path d="M0.5 0 H7.5 L4 4.5 Z" fill="#444"/></svg>
<svg class="r" style="left:1759px;top:370.5px" width="8" height="5" viewBox="0 0 8 5"><path d="M0.5 0 H7.5 L4 4.5 Z" fill="#444"/></svg>
<svg class="r" style="left:1770px;top:165px" width="23" height="30" viewBox="1770 165 23 30">
<path d="M1788.1 179 L1785.5 182 Q1783.8 184.5 1785 186.8 Q1787 189.2 1790 188 Q1791.5 187.3 1793.5 185.5" fill="none" stroke="#474747" stroke-width="1.5" stroke-linecap="round"/>
<path d="M1790.8 182.6 L1793.5 180" fill="none" stroke="#474747" stroke-width="1.5" stroke-linecap="round"/>
<path d="M1792.5 175 L1793.5 174" fill="none" stroke="#474747" stroke-width="1.6" stroke-linecap="round"/></svg>
</body></html>
